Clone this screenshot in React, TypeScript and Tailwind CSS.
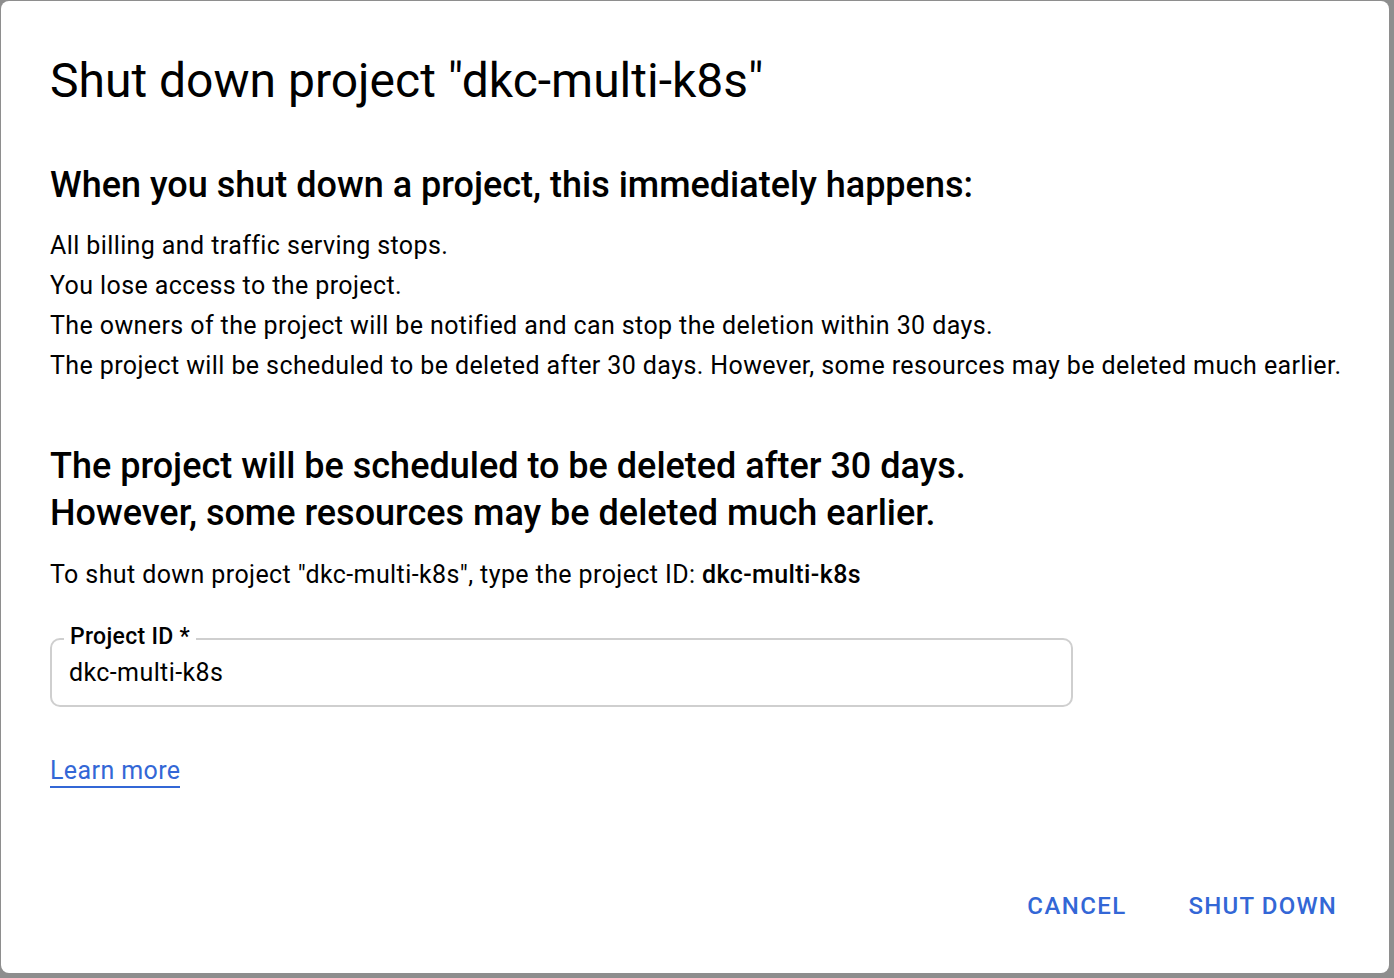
const App: React.FC = () => {
  const projectId = "dkc-multi-k8s";

  return (
    <div className="w-[1394px] h-[978px] bg-[#8e8e8e] pt-px pl-px font-['Roboto',sans-serif] text-black overflow-hidden">
      <div className="w-[1388px] h-[972px] bg-white rounded-[8px] flex flex-col pl-[49px] pr-[40px]">
        <h1 className="text-[48px] leading-[56px] mt-[52px]">
          Shut down project "{projectId}"
        </h1>
        <h2 className="text-[36px] leading-[44px] font-medium mt-[54px]">
          When you shut down a project, this immediately happens:
        </h2>
        <div className="mt-[19px] text-[25px] leading-[40px] tracking-[0.4px]">
          <div>All billing and traffic serving stops.</div>
          <div>You lose access to the project.</div>
          <div>The owners of the project will be notified and can stop the deletion within 30 days.</div>
          <div className="whitespace-nowrap">
            The project will be scheduled to be deleted after 30 days. However, some resources may be deleted much
            earlier.
          </div>
        </div>
        <h3 className="text-[36px] leading-[47px] font-medium mt-[57px]">
          The project will be scheduled to be deleted after 30 days.
          <br />
          However, some resources may be deleted much earlier.
        </h3>
        <p className="mt-[18px] text-[25px] leading-[40px] tracking-[0.4px]">
          To shut down project "{projectId}", type the project ID: <span className="font-medium">{projectId}</span>
        </p>
        <div className="relative mt-[43px] w-[1023px] h-[69px] border-2 border-[#cfcfcf] rounded-[10px] flex items-center px-[17px]">
          <span className="absolute -top-[19px] left-[12px] bg-white px-[6px] text-[23px] leading-[32px] font-medium tracking-[0.3px]">
            Project ID *
          </span>
          <input
            type="text"
            defaultValue={projectId}
            className="w-full text-[25px] leading-[32px] tracking-[0.4px] text-black outline-none bg-transparent"
          />
        </div>
        <div className="mt-[47px]">
          <a
            href="#"
            className="text-[25px] leading-[34px] tracking-[0.4px] text-[#3367d6] border-b-2 border-[#3367d6] pb-[1px]"
          >
            Learn more
          </a>
        </div>
        <div className="flex justify-end gap-[62px] mt-auto mb-[50px] pr-[12px]">
          <button className="text-[24px] leading-[34px] font-medium text-[#3367d6] tracking-[1.4px]">CANCEL</button>
          <button className="text-[24px] leading-[34px] font-medium text-[#3367d6] tracking-[1.2px]">SHUT DOWN</button>
        </div>
      </div>
    </div>
  );
};

export default App;
